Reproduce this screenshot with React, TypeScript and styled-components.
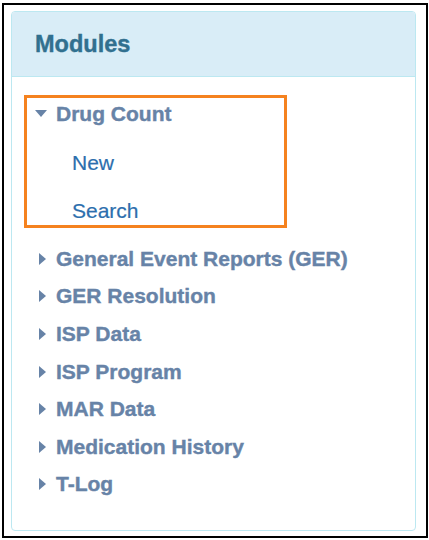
import React from "react";
import styled, { createGlobalStyle } from "styled-components";

const GlobalStyle = createGlobalStyle`
  html, body {
    margin: 0;
    padding: 0;
    background: #ffffff;
  }
  * {
    box-sizing: border-box;
  }
`;

const Frame = styled.div`
  margin: 3px 0 0 2px;
  width: 426px;
  height: 535px;
  border: 2px solid #000000;
  padding: 6px 9px 4px 7px;
  font-family: "Liberation Sans", Arial, sans-serif;
`;

const Panel = styled.section`
  width: 405px;
  height: 520px;
  border: 1px solid #bce8f1;
  border-radius: 4px;
  background: #ffffff;
  display: flex;
  flex-direction: column;
  overflow: hidden;
`;

const Header = styled.header`
  height: 65px;
  background: #d9edf7;
  border-bottom: 1px solid #bce8f1;
  display: flex;
  align-items: center;
  padding: 0 0 0 23px;
`;

const Title = styled.h3`
  margin: 0;
  font-size: 23.5px;
  font-weight: bold;
  color: #31708f;
  -webkit-text-stroke: 0.4px #31708f;
`;

const Body = styled.div`
  padding: 18px 0 0 12px;
  display: flex;
  flex-direction: column;
`;

const ActiveGroup = styled.div`
  width: 263px;
  height: 133px;
  border: 3px solid #f5821f;
  display: flex;
  flex-direction: column;
`;

const Row = styled.div<{ $h?: number }>`
  flex: none;
  height: ${(p) => p.$h ?? 37.6}px;
  display: flex;
  align-items: center;
  font-size: 21px;
  font-weight: bold;
  color: #6783a7;
  -webkit-text-stroke: 0.4px #6783a7;
`;

const ArrowSlot = styled.span<{ $open?: boolean }>`
  flex: none;
  width: ${(p) => (p.$open ? 29 : 32)}px;
  padding-left: ${(p) => (p.$open ? 8 : 15)}px;
  display: flex;
  align-items: center;
`;

const Caret = styled.span<{ $open?: boolean }>`
  display: block;
  width: 0;
  height: 0;
  ${(p) =>
    p.$open
      ? `border-left: 6.5px solid transparent;
         border-right: 6.5px solid transparent;
         border-top: 7px solid #6783a7;`
      : `border-top: 6px solid transparent;
         border-bottom: 6px solid transparent;
         border-left: 7px solid #6783a7;`}
`;

const SubList = styled.ul`
  list-style: none;
  margin: 20px 0 0;
  padding: 0 0 0 45px;
  display: flex;
  flex-direction: column;
  gap: 20px;
`;

const SubItem = styled.li`
  height: 28px;
  display: flex;
  align-items: center;
  font-size: 21px;
  color: #2c6ead;
  -webkit-text-stroke: 0.2px #2c6ead;
`;

const MenuList = styled.div`
  margin-top: 12px;
  display: flex;
  flex-direction: column;
`;

const modules = [
  "General Event Reports (GER)",
  "GER Resolution",
  "ISP Data",
  "ISP Program",
  "MAR Data",
  "Medication History",
  "T-Log",
];

export default function App() {
  return (
    <>
      <GlobalStyle />
      <Frame>
        <Panel>
          <Header>
            <Title>Modules</Title>
          </Header>
          <Body>
            <ActiveGroup>
              <Row $h={31}>
                <ArrowSlot $open>
                  <Caret $open />
                </ArrowSlot>
                Drug Count
              </Row>
              <SubList>
                <SubItem>New</SubItem>
                <SubItem>Search</SubItem>
              </SubList>
            </ActiveGroup>
            <MenuList>
              {modules.map((m) => (
                <Row key={m}>
                  <ArrowSlot>
                    <Caret />
                  </ArrowSlot>
                  {m}
                </Row>
              ))}
            </MenuList>
          </Body>
        </Panel>
      </Frame>
    </>
  );
}
